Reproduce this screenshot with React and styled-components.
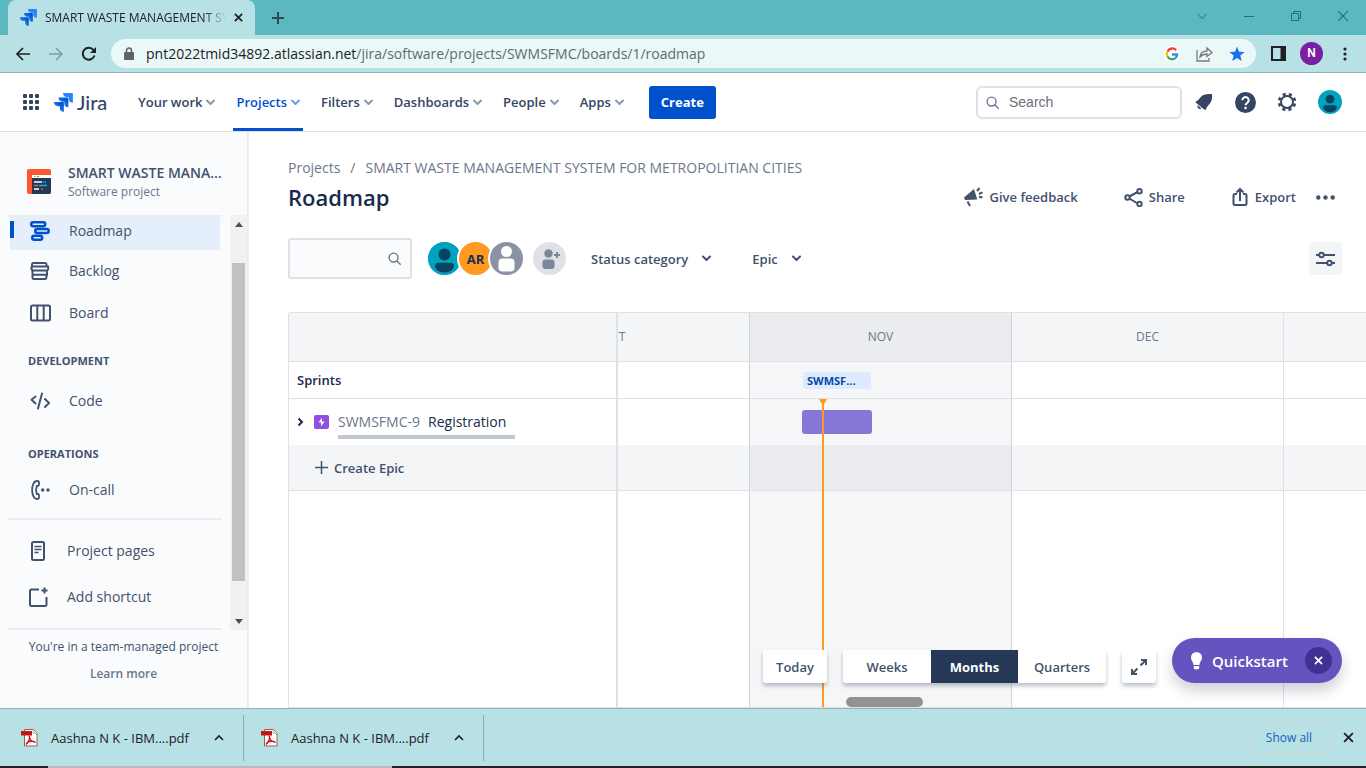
import React from "react";
import styled, { createGlobalStyle, css } from "styled-components";

const c = {
  ink: "#172b4d",
  text: "#42526e",
  nav: "#344563",
  muted: "#6b778c",
  line: "#dfe1e6",
  pale: "#f4f5f7",
  blue: "#0052cc",
  teal: "#b7e1e4",
};

const Global = createGlobalStyle`
  *, *::before, *::after { box-sizing: border-box; }
  body { margin: 0; background: #fff; color: ${c.ink}; font: 13px/20px "Open Sans", "Noto Sans", sans-serif; }
  button, input { font: inherit; color: inherit; }
  button { background: none; border: 0; padding: 0; cursor: pointer; }
  a { color: inherit; text-decoration: none; }
  svg { display: block; flex: none; }
  h1, h2 { margin: 0; padding: 0; }
`;

const Page = styled.div`
  display: flex;
  flex-direction: column;
  height: 100vh;
  min-height: 640px;
  overflow: hidden;
`;

/* Browser frame */
const TabStrip = styled.div`
  display: flex;
  flex: none;
  height: 35px;
  padding-left: 8px;
  background: #5bb8c1;
`;
const Tab = styled.div`
  display: flex;
  align-items: center;
  width: 247px;
  padding: 0 12px;
  border-radius: 8px 8px 0 0;
  background: ${c.teal};
  color: #202124;
`;
const TabTitle = styled.span`
  flex: 1;
  margin: 0 8px;
  overflow: hidden;
  white-space: nowrap;
  font-size: 12px;
  mask-image: linear-gradient(to right, #000 88%, transparent);
`;
const NewTab = styled.button`
  display: grid;
  place-items: center;
  width: 46px;
  color: #2c4a50;
`;
const WindowButtons = styled.div`
  display: flex;
  margin-left: auto;
  height: 31px;
  color: #2f6b73;
  button { display: grid; place-items: center; width: 47px; }
`;
const Toolbar = styled.div`
  display: flex;
  flex: none;
  align-items: center;
  height: 38px;
  padding: 0 12px 0 14px;
  background: ${c.teal};
  border-bottom: 1px solid #8fb4b8;
  color: #202124;
`;
const ToolButton = styled.button`
  display: grid;
  place-items: center;
  width: 18px;
  margin-right: ${(p) => p.$gap ?? 15}px;
  color: ${(p) => (p.$dim ? "#7d9c9f" : "#202124")};
`;
const PanelButton = styled(ToolButton)`
  margin: 0 0 0 13px;
`;
const Omnibox = styled.div`
  display: flex;
  flex: 1;
  align-items: center;
  height: 29px;
  padding: 0 11px 0 12px;
  border-radius: 15px;
  background: #ebf8f8;
`;
const Url = styled.div`
  flex: 1;
  margin-left: 11px;
  font-size: 14px;
  color: #5f6b6d;
  white-space: nowrap;
  b { font-weight: 400; color: #202124; }
`;
const OmniIcons = styled.div`
  display: flex;
  align-items: center;
  gap: 16px;
  color: #777;
`;
const Profile = styled.button`
  width: 23px;
  height: 23px;
  margin: 0 13px;
  border-radius: 50%;
  background: #7b1fa2;
  color: #fff;
  font: 600 12px/23px Roboto, sans-serif;
`;

/* Product header */
const Header = styled.header`
  display: flex;
  flex: none;
  align-items: center;
  height: 59px;
  padding: 0 24px 0 22px;
  border-bottom: 1px solid ${c.line};
  color: ${c.nav};
`;
const Brand = styled.a`
  display: flex;
  align-items: center;
  gap: 4px;
  width: 81px;
  margin-left: 14px;
  font: 500 20px/24px Lato, sans-serif;
`;
const Nav = styled.nav`
  display: flex;
  align-self: stretch;
  gap: 15px;
`;
const NavItem = styled.button`
  display: flex;
  align-items: center;
  gap: 4px;
  padding: 0 3px;
  font-weight: 600;
  color: ${(p) => (p.$active ? c.blue : c.nav)};
  box-shadow: ${(p) => (p.$active ? `inset 0 -3px ${c.blue}` : "none")};
  svg { opacity: 0.55; }
`;
const Create = styled.button`
  height: 33px;
  width: 67px;
  margin-left: 22px;
  border-radius: 3px;
  background: ${c.blue};
  color: #fff;
  font-weight: 700;
`;
const Search = styled.label`
  display: flex;
  align-items: center;
  gap: 8px;
  width: 206px;
  height: 33px;
  margin-left: auto;
  padding: 0 8px;
  border: 2px solid ${c.line};
  border-radius: 6px;
  color: ${c.muted};
  input {
    width: 100%;
    border: 0;
    outline: 0;
    background: none;
    font: 14px/20px "Liberation Sans", sans-serif;
  }
  input::placeholder { color: #6b6f7c; opacity: 1; }
`;
const HeaderIcons = styled.div`
  display: flex;
  align-items: center;
  gap: 21px;
  margin-left: 12px;
`;

/* Sidebar */
const Body = styled.div`
  display: flex;
  flex: 1;
  min-height: 0;
`;
const Sidebar = styled.aside`
  display: flex;
  flex: none;
  flex-direction: column;
  width: 249px;
  background: #fafbfc;
  border-right: 2px solid #ebecf0;
  color: ${c.text};
`;
const Project = styled.div`
  display: flex;
  flex: none;
  align-items: center;
  gap: 17px;
  height: 83px;
  padding: 16px 20px 0 27px;
  div { min-width: 0; }
`;
const ProjectName = styled.div`
  overflow: hidden;
  text-overflow: ellipsis;
  white-space: nowrap;
  font-size: 14px;
  font-weight: 600;
`;
const Small = styled.div`
  font-size: 12px;
  line-height: 18px;
  color: ${c.muted};
`;
const ScrollArea = styled.div`
  display: flex;
  flex: 1;
  min-height: 0;
`;
const Menu = styled.div`
  flex: 1;
  margin: 0 8px;
  overflow: hidden;
  border: solid #ebecf0;
  border-width: 2px 0;
`;
const Item = styled.a`
  display: flex;
  align-items: center;
  height: 42px;
  padding-left: 20px;
  gap: 17px;
  font-size: 14px;
  svg { width: 24px; }
  ${(p) => p.$active && css`
    height: 33px;
    margin: 0 2px;
    padding: 0 0 6px 14px;
    border-left: 4px solid ${c.blue};
    border-image: linear-gradient(transparent 5px, ${c.blue} 5px, ${c.blue} 21px, transparent 21px) 1;
    border-top: 0; border-bottom: 0; border-right: 0;
    background: #e5effc;
    svg { color: ${c.blue}; }
  `}
`;
const Heading = styled.h2`
  padding: ${(p) => p.$top}px 0 ${(p) => p.$bottom}px 20px;
  font-size: 11px;
  line-height: 16px;
  font-weight: 700;
`;
const Divider = styled.div`
  height: 2px;
  margin: 7px 0 8px;
  background: #ebecf0;
`;
const Shortcut = styled(Item)`
  height: 46px;
  padding-left: 18px;
`;
const Scrollbar = styled.div`
  display: flex;
  flex-direction: column;
  align-items: center;
  width: 17px;
  padding: 7px 0 6px;
  background: #f1f1f1;
`;
const Thumb = styled.div`
  flex: 1;
  width: 13px;
  margin: 36px 0 38px;
  background: #c1c1c1;
`;
const Arrow = styled.div`
  border: 4px solid transparent;
  ${(p) => (p.$up ? "border-top: 0; border-bottom: 5px solid #505050;" : "border-bottom: 0; border-top: 5px solid #505050;")}
`;
const Footer = styled.div`
  flex: none;
  height: 78px;
  padding-top: 7px;
  font-size: 12px;
  text-align: center;
  a { display: block; margin-top: 7px; font-weight: 600; color: ${c.muted}; }
`;

/* Roadmap */
const Main = styled.main`
  position: relative;
  display: flex;
  flex: 1;
  flex-direction: column;
  min-width: 0;
  padding: 26px 0 0 39px;
`;
const Crumbs = styled.div`
  display: flex;
  gap: 10px;
  height: 22px;
  font-size: 14px;
  color: ${c.muted};
`;
const Row = styled.div`
  display: flex;
  flex: none;
  align-items: center;
  padding-right: 31px;
`;
const Title = styled.h1`
  flex: 1;
  font-size: 22px;
  line-height: 34px;
  font-weight: 600;
`;
const Action = styled.button`
  display: flex;
  align-items: center;
  gap: 6px;
  margin-left: ${(p) => p.$left}px;
  font-weight: 600;
  color: ${c.text};
`;
const Filters = styled(Row)`
  height: 41px;
  margin: 24px 0 33px;
  padding-right: 24px;
`;
const FilterBox = styled.label`
  display: flex;
  align-items: center;
  width: 124px;
  height: 41px;
  padding: 0 9px;
  border: 2px solid ${c.line};
  border-radius: 3px;
  background: #fafbfc;
  color: ${c.muted};
  input { width: 100%; min-width: 0; border: 0; outline: 0; background: none; }
`;
const Avatars = styled.div`
  display: flex;
  margin-left: 14px;
`;
const Avatar = styled.button`
  display: grid;
  place-items: center;
  width: 37px;
  height: 37px;
  margin-right: ${(p) => p.$gap ?? -6}px;
  border: 2px solid #fff;
  border-radius: 50%;
  overflow: hidden;
  background: ${(p) => p.$bg};
  font-weight: 700;
`;
const Filter = styled(Action)`
  gap: 14px;
`;
const Settings = styled.button`
  display: grid;
  place-items: center;
  width: 33px;
  height: 33px;
  margin-left: auto;
  border-radius: 3px;
  background: ${c.pale};
  color: ${c.text};
`;
const Chart = styled.div`
  position: relative;
  display: flex;
  flex: 1;
  flex-direction: column;
  min-height: 0;
  border: 1px solid ${c.line};
  border-right: 0;
  border-top-left-radius: 3px;
  overflow: hidden;
`;
const ChartRow = styled.div`
  display: flex;
  flex: ${(p) => (p.$h ? "none" : 1)};
  height: ${(p) => (p.$h ? `${p.$h}px` : "auto")};
  border-bottom: ${(p) => (p.$line ? `1px solid ${c.line}` : 0)};
  background: ${(p) => (p.$shade ? c.pale : "#fff")};
`;
const Label = styled.div`
  display: flex;
  flex: none;
  align-items: center;
  width: 329px;
  padding-left: ${(p) => p.$pad ?? 8}px;
  border-right: 2px solid ${c.line};
  font-weight: 600;
`;
const Months = styled.div`
  display: grid;
  flex: 1;
  grid-template-columns: 272px 262px 272px 1fr;
  margin-left: -140px;
`;
const TimelineClip = styled.div`
  display: flex;
  flex: 1;
  min-width: 0;
  overflow: hidden;
`;
const Month = styled.div`
  display: flex;
  align-items: center;
  justify-content: ${(p) => (p.$start ? "flex-start" : "center")};
  padding-left: ${(p) => p.$start ?? 0}px;
  border-right: 1px solid ${(p) => (p.$edge ? "#d0d3db" : c.line)};
  background: ${(p) => (p.$now ? "rgba(9, 30, 66, 0.04)" : "transparent")};
  font-size: 12px;
  color: ${c.muted};
  &:last-child { border-right: 0; }
`;
const Sprint = styled.span`
  width: 68px;
  height: 17px;
  padding: 0 12px 0 4px;
  overflow: hidden;
  border-radius: 3px;
  background: #deebff;
  color: #0747a6;
  font-size: 11px;
  line-height: 17px;
  font-weight: 700;
  white-space: nowrap;
`;
const EpicBar = styled.span`
  width: 70px;
  height: 24px;
  border-radius: 3px;
  background: #8777d9;
`;
const EpicType = styled.svg`
  margin-left: 9px;
`;
const Issue = styled.a`
  display: flex;
  gap: 8px;
  width: 177px;
  margin: 7px 0 0 9px;
  padding-bottom: 3px;
  border-bottom: 4px solid #c1c7d0;
  font-size: 14px;
  font-weight: 400;
  span { color: ${c.muted}; }
`;
const TodayLine = styled.div`
  position: absolute;
  left: 533px;
  top: 86px;
  bottom: 0;
  width: 2px;
  background: #ff991f;
  &::before {
    content: "";
    position: absolute;
    left: -3px;
    border: 4px solid transparent;
    border-top: 7px solid #ff991f;
    border-bottom: 0;
  }
`;
const HScroll = styled.div`
  position: absolute;
  left: 557px;
  bottom: 0;
  width: 77px;
  height: 10px;
  border-radius: 5px;
  background: #939393;
`;
const Floating = styled.div`
  position: absolute;
  right: 24px;
  bottom: 25px;
  display: flex;
  align-items: flex-end;
  gap: 16px;
`;
const Card = styled.div`
  display: flex;
  height: 33px;
  border-radius: 3px;
  background: #fff;
  color: ${c.text};
  box-shadow: 0 3px 4px rgba(9, 30, 66, 0.28);
`;
const Scale = styled.button`
  display: grid;
  place-items: center;
  width: ${(p) => p.$w}px;
  font-weight: 600;
  ${(p) => p.$active && css`
    background: #253858;
    color: #fff;
    font-weight: 700;
  `}
`;
const Quickstart = styled.div`
  display: flex;
  align-items: center;
  width: 170px;
  height: 45px;
  padding: 0 10px 0 17px;
  border-radius: 23px;
  background: #6554c0;
  color: #fff;
  font-size: 15px;
  font-weight: 600;
  box-shadow: 0 8px 14px rgba(9, 30, 66, 0.2);
`;
const QuickOpen = styled.button`
  display: flex;
  align-items: center;
  flex: 1;
  gap: 8px;
`;
const QuickClose = styled.button`
  display: grid;
  place-items: center;
  width: 27px;
  height: 27px;
  border-radius: 50%;
  background: #403294;
`;

/* Downloads */
const Downloads = styled.div`
  display: flex;
  flex: none;
  align-items: center;
  height: 58px;
  padding-right: 12px;
  background: ${c.teal};
  border-top: 1px solid #8fb4b8;
  color: #202124;
`;
const Download = styled.button`
  display: flex;
  align-items: center;
  width: 240px;
  height: 46px;
  padding: 0 19px 0 17px;
  border-right: 1px solid #86aeb2;
  &:first-child { width: 244px; padding-left: 21px; }
  span { flex: 1; margin-left: 13px; text-align: left; }
`;
const ShowAll = styled.button`
  width: 80px;
  height: 33px;
  margin: 0 14px 0 auto;
  border: 1px solid #cfd6dc;
  border-radius: 4px;
  color: #1a5fc4;
  font-size: 12px;
`;
const Taskbar = styled.div`
  flex: none;
  height: 2px;
  background: linear-gradient(to right, #222 48px, #b9b9b9 48px, #b9b9b9 392px, #222 392px);
`;

const Line = ({ w = 16, h, box, sw = 2, children, ...rest }) => (
  <svg width={w} height={h ?? w} viewBox={box ?? `0 0 ${w} ${h ?? w}`} fill="none" stroke="currentColor" strokeWidth={sw} aria-hidden="true" {...rest}>
    {children}
  </svg>
);
const Chevron = () => <Line w={9} h={7} sw={2}><path d="M1 1.5 4.5 5 8 1.5" strokeLinecap="round" strokeLinejoin="round" /></Line>;
const Cross = ({ w = 10, sw = 2 }) => <Line w={w} box="0 0 10 10" sw={sw}><path d="m1 1 8 8M9 1 1 9" /></Line>;
const Lens = ({ w = 13 }) => <Line w={w} box="0 0 14 14" sw={1.5}><circle cx="6" cy="6" r="4.8" /><path d="m9.6 9.6 3.6 3.6" strokeLinecap="round" /></Line>;

function JiraMark({ size, id }) {
  return (
    <svg width={size} height={size} viewBox="0 0 32 32" aria-hidden="true">
      <defs>
        <linearGradient id={`${id}a`} x1="1" y1="0" x2="0.3" y2="0.8"><stop offset="0.2" stopColor="#0052cc" /><stop offset="1" stopColor="#2684ff" /></linearGradient>
      </defs>
      <path fill="#2684ff" d="M30.5 0H15.2a6.9 6.9 0 0 0 6.9 6.9h2.8v2.7a6.9 6.9 0 0 0 6.9 6.9V1.3C31.8.6 31.2 0 30.5 0z" />
      <path fill={`url(#${id}a)`} d="M23 7.7H7.6a6.9 6.9 0 0 0 6.9 6.9h2.8v2.7a6.9 6.9 0 0 0 6.9 6.9V9c0-.7-.6-1.3-1.2-1.3z" />
      <path fill={`url(#${id}a)`} d="M15.3 15.3H0a6.9 6.9 0 0 0 6.9 6.900h2.8v2.7a6.9 6.9 0 0 0 6.9 6.9V16.6c0-.7-.6-1.3-1.3-1.3z" />
    </svg>
  );
}

const Person = ({ size, bg, fg }) => (
  <svg width={size} height={size} viewBox="0 0 33 33" aria-hidden="true">
    <circle cx="16.5" cy="16.5" r="16.5" fill={bg} />
    <circle cx="16.5" cy="12.5" r="6" fill={fg} />
    <path fill={fg} d="M7 24c0-2 1.500-3.200 3.500-3.200h12c2 0 3.500 1.200 3.500 3.200 0 3-4 6.500-9.500 6.500S7 27 7 24z" />
  </svg>
);

const PdfIcon = () => (
  <svg width="17" height="18" viewBox="0 0 17 18" aria-hidden="true">
    <path d="M3.5.5h9l3.500 4v12.500H3.500z" fill="#fff" stroke="#9b5a5a" />
    <path d="M12 .5v4h4" fill="#e5e5e5" stroke="#aaa" strokeWidth=".7" />
    <path d="M0 2h11v4.500H0z" fill="#c4161c" />
    <path d="M8.300 6.500c1 3-.3 6-3.300 9M8.500 9c1 2.500 3 4 6 4.300M5.500 13.800c2.500-1.500 5-2 8-1.300" fill="none" stroke="#c4161c" strokeWidth="1.500" />
  </svg>
);

const icons = {
  roadmap: <Line w={24} h={22} sw={2.5}><rect x="3.2" y="2.2" width="14" height="4" rx="2" /><rect x="7.2" y="9" width="13.5" height="4" rx="2" /><rect x="4.2" y="15.8" width="10" height="4" rx="2" /></Line>,
  backlog: <Line w={24} h={20}><path d="M5 2h12q1.500 0 1.500 1.500V5.500H4V3.500Q4 2 5 2zM4 5.500h16q1 4-1.500 4H4.500Q2.500 7.500 4 5.500zM4.500 9.500v4.300H19V9.500M4.500 13.800v3q0 1.200 1.200 1.200h11.500q1.200 0 1.200-1.200v-3" /></Line>,
  board: <Line w={24} h={18}><rect x="3" y="1.5" width="19" height="15" rx="1.5" /><path d="M9.300 1.500v15M15.700 1.500v15" /></Line>,
  code: <Line w={24} h={18}><path d="M7.500 4.500 3.500 7.800l4 3.700M17 7l4 4-4 4M14 1.500l-4 15" strokeLinecap="round" strokeLinejoin="round" /></Line>,
  call: <Line w={24} h={22} sw={1.8}><path d="M9 2C2.500 2 2.500 20 9 20h.5Q11 20 11 18.500v-2Q11 15 9.500 15H8.800c-1-2.500-1-5.500 0-8h.7Q11 7 11 5.500v-2Q11 2 9.500 2z" /><g fill="currentColor" stroke="none"><circle cx="14.700" cy="11" r="1.700" /><circle cx="20" cy="11" r="1.700" /></g></Line>,
  page: <Line w={24} h={20}><rect x="6" y="1" width="12" height="18" rx="1.5" /><path d="M8.500 5.500h7M8.500 8.500h7M8.500 11.500h4" strokeWidth="1.5" /></Line>,
  shortcut: <Line w={24} h={22}><path d="M13 3.500H5.500Q4 3.500 4 5v13.500Q4 20 5.500 20H19q1.500 0 1.500-1.500V11M18.500 1.500v6M15.500 4.500h6" /></Line>,
};

const boardItems = [["Backlog", "backlog"], ["Board", "board"]];
const navItems = ["Your work", "Projects", "Filters", "Dashboards", "People", "Apps"];

function Timeline({ header, children, start }) {
  return (
    <TimelineClip>
      <Months>
        <Month $edge>{header && "OCT"}</Month>
        <Month $edge $now $start={start}>{header ? "NOV" : children}</Month>
        <Month>{header && "DEC"}</Month>
        <Month />
      </Months>
    </TimelineClip>
  );
}

function BrowserTop() {
  return (
    <>
      <TabStrip>
        <Tab>
          <JiraMark size={17} id="tab" />
          <TabTitle>SMART WASTE MANAGEMENT SYSTEM</TabTitle>
          <button aria-label="Close tab"><Cross w={9} /></button>
        </Tab>
        <NewTab aria-label="New tab"><Line w={12}><path d="M6 0v12M0 6h12" /></Line></NewTab>
        <WindowButtons>
          <button aria-label="Search tabs"><Line w={10} h={6} sw={1}><path d="m0 .5 5 5 5-5" /></Line></button>
          <button aria-label="Minimise"><Line w={10} sw={1}><path d="M0 5.500h10" /></Line></button>
          <button aria-label="Restore"><Line w={10} sw={1}><path d="M.5 2.500h7v7h-7zM2.500 2.500v-2h7v7h-2" /></Line></button>
          <button aria-label="Close"><Cross w={12} sw={1} /></button>
        </WindowButtons>
      </TabStrip>
      <Toolbar>
        <ToolButton aria-label="Back"><Line w={16} sw={1.7}><path d="M15 8H2M8 2 2 8l6 6" /></Line></ToolButton>
        <ToolButton aria-label="Forward" $dim><Line w={16} sw={1.5}><path d="M1 8h13M8 2l6 6-6 6" /></Line></ToolButton>
        <ToolButton aria-label="Reload" $gap={13}><Line w={16}><path d="M13.500 9.500A6 6 0 1 1 12.500 4" /><path d="M15 1v6H9z" fill="currentColor" stroke="none" /></Line></ToolButton>
        <Omnibox>
          <svg width="12" height="14" viewBox="0 0 12 14" fill="#5f6368"><rect x="1" y="5" width="10" height="8" rx="1" /><path d="M3.500 6V3.500a2.500 2.500 0 0 1 5 0V6" fill="none" stroke="#5f6368" strokeWidth="1.5" /></svg>
          <Url><b>pnt2022tmid34892.atlassian.net</b>/jira/software/projects/SWMSFMC/boards/1/roadmap</Url>
          <OmniIcons>
            <svg width="16" height="16" viewBox="0 0 16 16" fill="none" strokeWidth="2.3"><circle cx="8" cy="8" r="8" fill="#fff" /><path d="M12.200 4.300A5.200 5.200 0 0 0 3.500 5.500" stroke="#ea4335" /><path d="M3.500 5.500a5.200 5.200 0 0 0 0 5" stroke="#fbbc05" /><path d="M3.500 10.500a5.200 5.200 0 0 0 8 1.500" stroke="#34a853" /><path d="M11.500 12a5 5 0 0 0 1.700-3.500H8" stroke="#4285f4" /></svg>
            <Line w={17} h={16} sw={1.3}><path d="M1 4v11h12v-3M4 11c.5-4 3-6 7-6V2l5 4.500-5 4V8c-3 0-5 .7-7 3z" /></Line>
            <svg width="16" height="16" viewBox="0 0 16 16" fill="#1a73e8"><path d="m8 .5 2 5.200 5.700.3-4.400 3.500 1.500 5.500L8 12l-4.800 3 1.500-5.500L.3 6 6 5.700z" /></svg>
          </OmniIcons>
        </Omnibox>
        <PanelButton aria-label="Side panel"><Line w={15}><path d="M1 1h13v13H1z" /><path d="M9.500 1H14v13H9.500z" fill="currentColor" stroke="none" /></Line></PanelButton>
        <Profile>N</Profile>
        <ToolButton aria-label="Menu" $gap={0}><svg width="4" height="14" viewBox="0 0 4 14" fill="currentColor"><circle cx="2" cy="2" r="1.6" /><circle cx="2" cy="7" r="1.6" /><circle cx="2" cy="12" r="1.6" /></svg></ToolButton>
      </Toolbar>
    </>
  );
}

function ProductHeader() {
  return (
    <Header>
      <button aria-label="Apps"><svg width="18" height="18" viewBox="0 0 18 18" fill="currentColor">{[1, 7, 13].flatMap((y) => [1, 7, 13].map((x) => <rect key={`${x}-${y}`} x={x} y={y} width="4" height="4" rx="1" />))}</svg></button>
      <Brand href="#"><JiraMark size={19} id="brand" />Jira</Brand>
      <Nav>
        {navItems.map((n) => <NavItem key={n} $active={n === "Projects"}>{n}<Chevron /></NavItem>)}
      </Nav>
      <Create>Create</Create>
      <Search><Lens /><input aria-label="Search" placeholder="Search" /></Search>
      <HeaderIcons>
        <button aria-label="Notifications"><svg width="20" height="20" viewBox="0 0 20 20" fill="currentColor"><path d="M2 9.500C5 8.500 6 4.500 9.500 3c2.500-1 5.500-1 8.500-.8.300 2.500.2 5-1 7.500-1.500 3-3.800 4-5 7.300-.3 1-1 1.200-1.800.5L2 10.800c-.6-.5-.6-1 0-1.300z" /><path d="M3.800 13.200 7.300 16.400c-1.700 1.800-5-1.200-3.500-3.200z" /></svg></button>
        <button aria-label="Help"><svg width="21" height="21" viewBox="0 0 21 21"><circle cx="10.5" cy="10.5" r="10.5" fill="currentColor" /><path d="M7.300 8.300a3.200 3.200 0 1 1 5 2.600c-1 .7-1.800 1.100-1.800 2.400" fill="none" stroke="#fff" strokeWidth="2" /><circle cx="10.5" cy="16" r="1.3" fill="#fff" /></svg></button>
        <button aria-label="Settings"><Line w={20} sw={2}><circle cx="10" cy="10" r="6" /><circle cx="10" cy="10" r="8" strokeWidth="2.6" strokeDasharray="3.140 3.143" strokeDashoffset="-1.6" /></Line></button>
        <button aria-label="Your profile"><Person size={24} bg="#00a3bf" fg="#0b4261" /></button>
      </HeaderIcons>
    </Header>
  );
}

function SideNav() {
  return (
    <Sidebar>
      <Project>
        <svg width="24" height="25" viewBox="0 0 24 25"><rect width="24" height="25" rx="2" fill="#ff5630" /><path d="M5 6h19v4H5z" fill="#fff" /><path d="M5 9h19v14q0 2-2 2H5z" fill="#253858" /><path d="M7 7.500h2" stroke="#ffab00" /><path d="M10 7.500h2" stroke="#36b37e" /><g strokeWidth="1.5"><path d="M7 13h8M7 20h5" stroke="#fff" /><path d="M16 13h3" stroke="#2684ff" /><path d="M7 16.500h4M14 20h2" stroke="#ff5630" /><path d="M12 16.500h8" stroke="#00b8d9" /></g></svg>
        <div>
          <ProjectName>SMART WASTE MANAGEMENT SYSTEM</ProjectName>
          <Small>Software project</Small>
        </div>
      </Project>
      <ScrollArea>
        <Menu>
          <Item href="#" $active>{icons.roadmap}Roadmap</Item>
          {boardItems.map(([t, i]) => <Item key={t} href="#">{icons[i]}{t}</Item>)}
          <Heading $top={19} $bottom={11}>DEVELOPMENT</Heading>
          <Item href="#">{icons.code}Code</Item>
          <Heading $top={24} $bottom={7}>OPERATIONS</Heading>
          <Item href="#">{icons.call}On-call</Item>
          <Divider />
          <Shortcut href="#">{icons.page}Project pages</Shortcut>
          <Shortcut href="#">{icons.shortcut}Add shortcut</Shortcut>
        </Menu>
        <Scrollbar><Arrow $up /><Thumb /><Arrow /></Scrollbar>
      </ScrollArea>
      <Footer>You're in a team-managed project<a href="#">Learn more</a></Footer>
    </Sidebar>
  );
}

function Roadmap() {
  return (
    <Main>
      <Crumbs><a href="#">Projects</a><span>/</span><a href="#">SMART WASTE MANAGEMENT SYSTEM FOR METROPOLITIAN CITIES</a></Crumbs>
      <Row>
        <Title>Roadmap</Title>
        <Action $left={0}>
          <Line w={20}><path d="M0 10.500 10 2l3.300 10.500L1 13z" fill="currentColor" stroke="none" /><path d="M3.500 14.500 6 19M13 4l2.500-3M15 7l3.500-1.700M15 9.700l3.500.7" /></Line>Give feedback
        </Action>
        <Action $left={46}>
          <Line w={19}><path d="m4.500 9 10-5.500M4.500 10l10 6" /><g fill="#fff"><circle cx="3.5" cy="9.5" r="2.2" /><circle cx="15.5" cy="3.2" r="2.2" /><circle cx="15.5" cy="16" r="2.2" /></g></Line>Share
        </Action>
        <Action $left={46}>
          <Line w={18} h={20}><path d="M6 7H4Q2.500 7 2.500 8.500v8Q2.500 18 4 18h10q1.500 0 1.500-1.500v-8Q15.500 7 14 7h-2M9 14V2.500M5.500 5.500 9 2l3.500 3.500" /></Line>Export
        </Action>
        <Action $left={20} aria-label="More"><svg width="19" height="5" viewBox="0 0 19 5" fill="currentColor"><circle cx="2.3" cy="2.5" r="2.2" /><circle cx="9.5" cy="2.5" r="2.2" /><circle cx="16.7" cy="2.5" r="2.2" /></svg></Action>
      </Row>
      <Filters>
        <FilterBox><input aria-label="Search roadmap" /><Lens /></FilterBox>
        <Avatars>
          <Avatar aria-label="Member" $bg="#00a3bf"><Person size={33} bg="#00a3bf" fg="#0b4261" /></Avatar>
          <Avatar $bg="#ff991f">AR</Avatar>
          <Avatar aria-label="Unassigned" $bg="#8993a4" $gap={6}><svg width="33" height="33" viewBox="0 0 33 33" fill="#fff"><circle cx="16.5" cy="9.5" r="5.5" /><rect x="8.5" y="16.5" width="16" height="13" rx="4" /></svg></Avatar>
          <Avatar aria-label="Add people" $bg="#dfe1e6" $gap={0}><svg width="33" height="33" viewBox="0 0 33 33" fill="#7a869a"><circle cx="15.5" cy="11.5" r="4.2" /><rect x="9.5" y="17.5" width="12" height="9.5" rx="3" /><path d="M23 10h2v2h2v2h-2v2h-2v-2h-2v-2h2z" /></svg></Avatar>
        </Avatars>
        <Filter $left={23}>Status category<Chevron /></Filter>
        <Filter $left={41}>Epic<Chevron /></Filter>
        <Settings aria-label="View settings"><Line w={19} h={16}><path d="M0 4h19M0 12h19" /><g fill="#fff"><circle cx="5.5" cy="4" r="2.2" /><circle cx="13.5" cy="12" r="2.2" /></g></Line></Settings>
      </Filters>
      <Chart>
        <ChartRow $h={49} $line $shade><Label /><Timeline header /></ChartRow>
        <ChartRow $h={37} $line><Label>Sprints</Label><Timeline start={53}><Sprint>SWMSF...</Sprint></Timeline></ChartRow>
        <ChartRow $h={46}>
          <Label>
            <Line w={8} h={10}><path d="m1.500 1.500 3.500 3.500-3.500 3.500" /></Line>
            <EpicType width="15" height="15" viewBox="0 0 15 15"><rect width="15" height="14" rx="2" fill="#904ee2" /><path d="M8 2.800 4.500 7.500H7v3.800l3.700-4.800H8z" fill="#fff" /></EpicType>
            <Issue href="#"><span>SWMSFMC-9</span>Registration</Issue>
          </Label>
          <Timeline start={52}><EpicBar /></Timeline>
        </ChartRow>
        <ChartRow $h={46} $line $shade>
          <Label $pad={26}><Action $left={0}><Line w={13} sw={1.5}><path d="M6.500 0v13M0 6.500h13" /></Line>Create Epic</Action></Label>
          <Timeline />
        </ChartRow>
        <ChartRow><Label /><Timeline /></ChartRow>
        <TodayLine />
        <HScroll />
      </Chart>
      <Floating>
        <Card><Scale $w={64}>Today</Scale></Card>
        <Card><Scale $w={88}>Weeks</Scale><Scale $w={87} $active>Months</Scale><Scale $w={88}>Quarters</Scale></Card>
        <Card><Scale $w={34} aria-label="Full screen"><Line w={16}><path d="M9.500 6.500 15 1M10 1h5v5M6.500 9.500 1 15M1 10v5h5" /></Line></Scale></Card>
        <Quickstart>
          <QuickOpen><svg width="15" height="18" viewBox="0 0 15 18" fill="currentColor"><path d="M7.500 0a5.500 5.500 0 0 0-5.500 5.500c0 3 2.300 4 2.500 7.500h6c.2-3.500 2.500-4.500 2.500-7.500A5.500 5.500 0 0 0 7.500 0zM4.800 14h5.400v2.500q-2.700 2-5.400 0z" /></svg>Quickstart</QuickOpen>
          <QuickClose aria-label="Dismiss"><Cross w={9} /></QuickClose>
        </Quickstart>
      </Floating>
    </Main>
  );
}

const Caret = () => <Line w={10} h={7} sw={1.7}><path d="m1 6 4-4 4 4" /></Line>;

export default function App() {
  return (
    <Page>
      <Global />
      <BrowserTop />
      <ProductHeader />
      <Body><SideNav /><Roadmap /></Body>
      <Downloads>
        <Download><PdfIcon /><span>Aashna N K - IBM....pdf</span><Caret /></Download>
        <Download><PdfIcon /><span>Aashna N K - IBM....pdf</span><Caret /></Download>
        <ShowAll>Show all</ShowAll>
        <button aria-label="Close downloads"><Cross w={11} sw={1.7} /></button>
      </Downloads>
      <Taskbar />
    </Page>
  );
}
